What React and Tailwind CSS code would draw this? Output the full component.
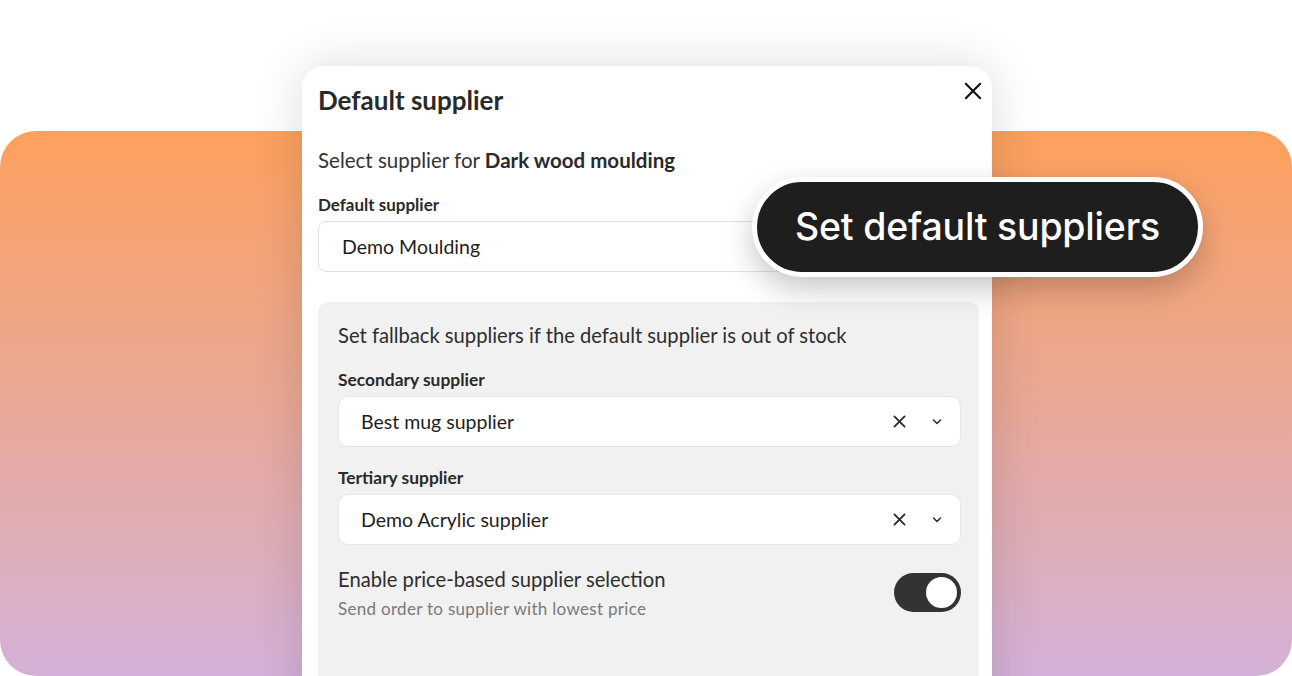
import React from "react";

function CloseIcon({ className }) {
  return (
    <svg viewBox="0 0 20 20" className={className} fill="none" stroke="currentColor" strokeWidth="2.4" strokeLinecap="round">
      <path d="M2 2 L18 18 M18 2 L2 18" />
    </svg>
  );
}

function SmallX() {
  return (
    <svg viewBox="0 0 14 14" className="w-[13px] h-[13px] text-[#2b2b2b]" fill="none" stroke="currentColor" strokeWidth="2" strokeLinecap="round">
      <path d="M1.5 1.5 L12.5 12.5 M12.5 1.5 L1.5 12.5" />
    </svg>
  );
}

function Chevron() {
  return (
    <svg viewBox="0 0 10 6" className="w-[10px] h-[6px] text-[#333]" fill="none" stroke="currentColor" strokeWidth="1.6" strokeLinecap="round" strokeLinejoin="round">
      <path d="M1.5 1 L5 4.5 L8.5 1" />
    </svg>
  );
}

function SupplierSelect({ value }) {
  return (
    <div className="h-[51px] bg-white rounded-[10px] border border-[#e6e6e6] flex items-center pl-[22px] pr-[18px]">
      <span className="flex-1 text-[19.5px] text-[#1e1e1e]">{value}</span>
      <div className="flex items-center gap-[26px]">
        <SmallX />
        <Chevron />
      </div>
    </div>
  );
}

export default function App() {
  return (
    <div
      className="relative w-[1292px] h-[676px] overflow-hidden bg-white"
      style={{ fontFamily: "Lato, 'Noto Sans', sans-serif" }}
    >
      {/* gradient backdrop */}
      <div className="absolute left-0 right-0 top-[131px] h-[545px] rounded-[36px] bg-gradient-to-b from-[#fca05c] via-[#e9a896] to-[#d4b1d8]" />

      {/* dialog */}
      <div className="relative ml-[302px] mt-[66px] w-[690px] h-[700px] bg-white rounded-[22px] shadow-[0_0_50px_rgba(0,0,0,0.14)] pl-[16px] pr-[13px] pt-[20px]">
        <div className="flex items-center h-[28px]">
          <h2 className="flex-1 text-[26px] leading-[28px] font-bold text-[#2a2a2a]">Default supplier</h2>
        </div>
        <CloseIcon className="absolute right-[10px] top-[16px] w-[18px] h-[18px] text-[#111]" />

        <p className="mt-[34px] text-[20.5px] leading-[24px] text-[#333]">
          Select supplier for <span className="font-bold text-[#2a2a2a]">Dark wood moulding</span>
        </p>

        <div className="mt-[23px] text-[17px] leading-[20px] font-bold text-[#2a2a2a]">Default supplier</div>
        <div className="mt-[6px] h-[51px] rounded-[8px] border border-[#e2e2e2] flex items-center pl-[23px]">
          <span className="text-[19.5px] text-[#1e1e1e]">Demo Moulding</span>
        </div>

        <div className="mt-[30px] h-[420px] bg-[#f1f1f1] rounded-[10px] pl-[20px] pr-[18px] pt-[21px]">
          <p className="text-[20.2px] leading-[24px] text-[#2e2e2e]">
            Set fallback suppliers if the default supplier is out of stock
          </p>

          <div className="mt-[23px] text-[17.4px] leading-[20px] font-bold text-[#2a2a2a]">Secondary supplier</div>
          <div className="mt-[6px]">
            <SupplierSelect value="Best mug supplier" />
          </div>

          <div className="mt-[21px] text-[17.4px] leading-[20px] font-bold text-[#2a2a2a]">Tertiary supplier</div>
          <div className="mt-[6px]">
            <SupplierSelect value="Demo Acrylic supplier" />
          </div>

          <div className="mt-[22px] flex items-start">
            <div className="flex-1">
              <div className="text-[20.2px] leading-[24px] text-[#2e2e2e]">Enable price-based supplier selection</div>
              <div className="mt-[8px] text-[17px] leading-[20px] tracking-[0.3px] text-[#7a7a7a]">Send order to supplier with lowest price</div>
            </div>
            <div className="mt-[6px] w-[67px] h-[39px] rounded-full bg-[#333333] flex items-center justify-end pr-[4px]">
              <div className="w-[31px] h-[31px] rounded-full bg-white" />
            </div>
          </div>
        </div>
      </div>

      {/* callout pill */}
      <div className="absolute left-[752px] top-[177px] w-[451px] h-[100px] rounded-full border-[5px] border-white bg-[#1e1e1e] shadow-[0_12px_30px_rgba(0,0,0,0.22)] flex items-center justify-center">
        <span
          className="text-white text-[37.5px] font-medium tracking-[-0.2px]"
          style={{ fontFamily: "Inter, 'Open Sans', sans-serif" }}
        >
          Set default suppliers
        </span>
      </div>
    </div>
  );
}
